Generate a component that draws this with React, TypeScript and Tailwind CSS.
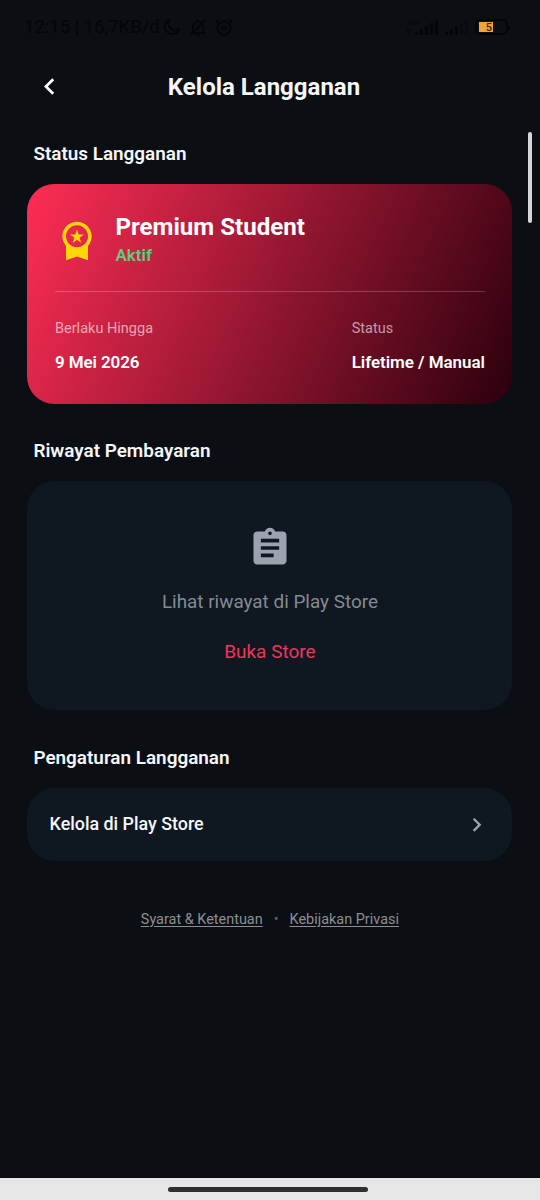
import type { ReactNode } from "react";
import {
  MdAssignment,
  MdChevronLeft,
  MdChevronRight,
  MdWorkspacePremium,
} from "react-icons/md";

const signalBars = [3, 6, 9, 12, 15];

const StatusBar = () => (
  <div className="flex h-[54px] items-center pl-[24px] pr-[30px] text-[#030507]">
    <span className="w-[136px] whitespace-nowrap text-[18.5px] leading-none">12:15 | 16,7KB/d</span>
    <svg className="ml-[3px] h-[18px] w-[18px]" viewBox="0 0 18 18" fill="none" stroke="currentColor" strokeWidth="1.8">
      <path d="M6.5 1.5a7.6 7.6 0 1 0 10 9.8A7.2 7.2 0 0 1 6.5 1.5z" strokeLinejoin="round" />
    </svg>
    <svg className="ml-[8px] h-[19px] w-[18px]" viewBox="0 0 18 19" fill="none" stroke="currentColor" strokeWidth="1.8">
      <path d="M1.5 15h15M3.8 14.500V8.500a5.200 5.200 0 0 1 10.400 0v6M7.500 17.500h3M9 3V1.200M1.500 17.500 16.500 1.500" />
    </svg>
    <svg className="ml-[7px] h-[18px] w-[20px]" viewBox="0 0 20 18" fill="none" stroke="currentColor" strokeWidth="1.8">
      <circle cx="10" cy="10" r="6.7" />
      <path d="M1.5 4.5 5 1.5M18.5 4.5 15 1.5M7 9l3 2.500L13 8.500" />
    </svg>

    <div className="ml-auto flex items-end">
      <div className="mr-[-6px] flex flex-col text-[8px] leading-[8px]">
        <span>4G+</span>
        <span>0</span>
      </div>
      <div className="flex items-end gap-[2px]">
        {signalBars.map((height) => (
          <span key={height} className="w-[3px] bg-current" style={{ height }} />
        ))}
      </div>
      <div className="ml-[7px] flex items-end gap-[2px]">
        {signalBars.map((height, index) => (
          <span
            key={height}
            className={index > 2 ? "w-[3px] bg-current opacity-40" : "w-[3px] bg-current"}
            style={{ height }}
          />
        ))}
      </div>
    </div>
    <div className="ml-[7px] flex items-center">
      <div className="flex h-[16px] w-[33px] items-center rounded-[5px] border-2 border-current pl-[2px]">
        <span className="flex h-[10px] w-[14px] items-center justify-end bg-[#f0a336] pr-px text-[11px] font-medium leading-none text-[#3a2508]">
          5
        </span>
      </div>
      <span className="h-[5px] w-[2px] rounded-r bg-current" />
    </div>
  </div>
);

const SectionTitle = ({ children }: { children: ReactNode }) => (
  <h2 className="px-[6px] text-[18.9px] font-semibold leading-[24px] text-[#f5f6f8]">{children}</h2>
);

const App = () => {
  return (
    <div className="relative flex h-[1200px] w-[540px] flex-col overflow-hidden bg-[#0b0e13] font-['Roboto',sans-serif]">
      <StatusBar />

      <header className="grid h-[66px] grid-cols-[68px_1fr_80px] items-center pl-[33px]">
        <button type="button" className="mb-[2px] text-white">
          <MdChevronLeft size={33} />
        </button>
        <h1 className="-ml-[33px] text-center text-[24px] font-bold leading-none text-[#f5f6f8]">Kelola Langganan</h1>
      </header>

      <main className="flex flex-1 flex-col pl-[27.4px] pr-[27.6px] pt-[22px]">
        <SectionTitle>Status Langganan</SectionTitle>

        <section className="mt-[18px] h-[219.5px] rounded-[27.5px] bg-[linear-gradient(114.35deg,#ff2d55,#2b000d)] px-[27.6px] pt-[26px]">
          <div className="flex h-[60px] items-center">
            <MdWorkspacePremium size={44} className="text-[#ffd60a]" />
            <div className="-mt-[3px] ml-[16.5px]">
              <p className="text-[24.1px] font-bold leading-[29px] text-white">Premium Student</p>
              <p className="mt-[3px] text-[17px] font-semibold leading-[20px] text-[#5fce7d]">Aktif</p>
            </div>
          </div>
          <div className="mt-[20.5px] h-[1.4px] bg-white/20" />
          <div className="mt-[27.5px] flex justify-between">
            <div>
              <p className="text-[14.5px] leading-[20px] text-white/60">Berlaku Hingga</p>
              <p className="mt-[12px] text-[17px] font-semibold leading-[22px] tracking-[-0.1px] text-white">9 Mei 2026</p>
            </div>
            <div>
              <p className="text-[14.5px] leading-[20px] text-white/60">Status</p>
              <p className="mt-[12px] text-[17px] font-semibold leading-[22px] tracking-[-0.06px] text-white">Lifetime / Manual</p>
            </div>
          </div>
        </section>

        <div className="mt-[35.5px]">
          <SectionTitle>Riwayat Pembayaran</SectionTitle>
        </div>
        <section className="mt-[18px] flex h-[229px] flex-col items-center rounded-[27.5px] bg-[#0f1720] pt-[45px]">
          <MdAssignment size={44} className="text-[#9ca3af]" />
          <p className="mt-[20px] text-[18.9px] leading-[24px] text-[#858a91]">Lihat riwayat di Play Store</p>
          <button type="button" className="mt-[26px] text-[19px] leading-[24px] text-[#f0355a]">
            Buka Store
          </button>
        </section>

        <div className="mt-[36px]">
          <SectionTitle>Pengaturan Langganan</SectionTitle>
        </div>
        <button
          type="button"
          className="mt-[18px] flex h-[72.5px] items-center justify-between rounded-[27.5px] bg-[#0f1720] pl-[22.2px] pr-[21.8px]"
        >
          <span className="mt-px text-[17.875px] font-medium text-[#f5f6f8]">Kelola di Play Store</span>
          <MdChevronRight size={27.5} className="text-[#9ca3af]" />
        </button>

        <footer className="mt-[49.5px] flex items-center justify-center text-[14.45px] leading-[20px] text-[#8b8f95]">
          <a className="underline underline-offset-2">Syarat &amp; Ketentuan</a>
          <span className="mx-[11px] text-[#5d6167]">•</span>
          <a className="underline underline-offset-2">Kebijakan Privasi</a>
        </footer>
      </main>

      <div className="flex h-[22px] justify-center bg-[#e6e6e6] pt-[8.5px]">
        <div className="mr-[4px] h-[5.5px] w-[200px] rounded-full bg-[#2f2f2f]" />
      </div>

      {/* scroll indicator floating over the content */}
      <div className="absolute right-[8px] top-[132px] h-[91px] w-[4.5px] rounded-full bg-[#d6d6d6]" />
    </div>
  );
};

export default App;
